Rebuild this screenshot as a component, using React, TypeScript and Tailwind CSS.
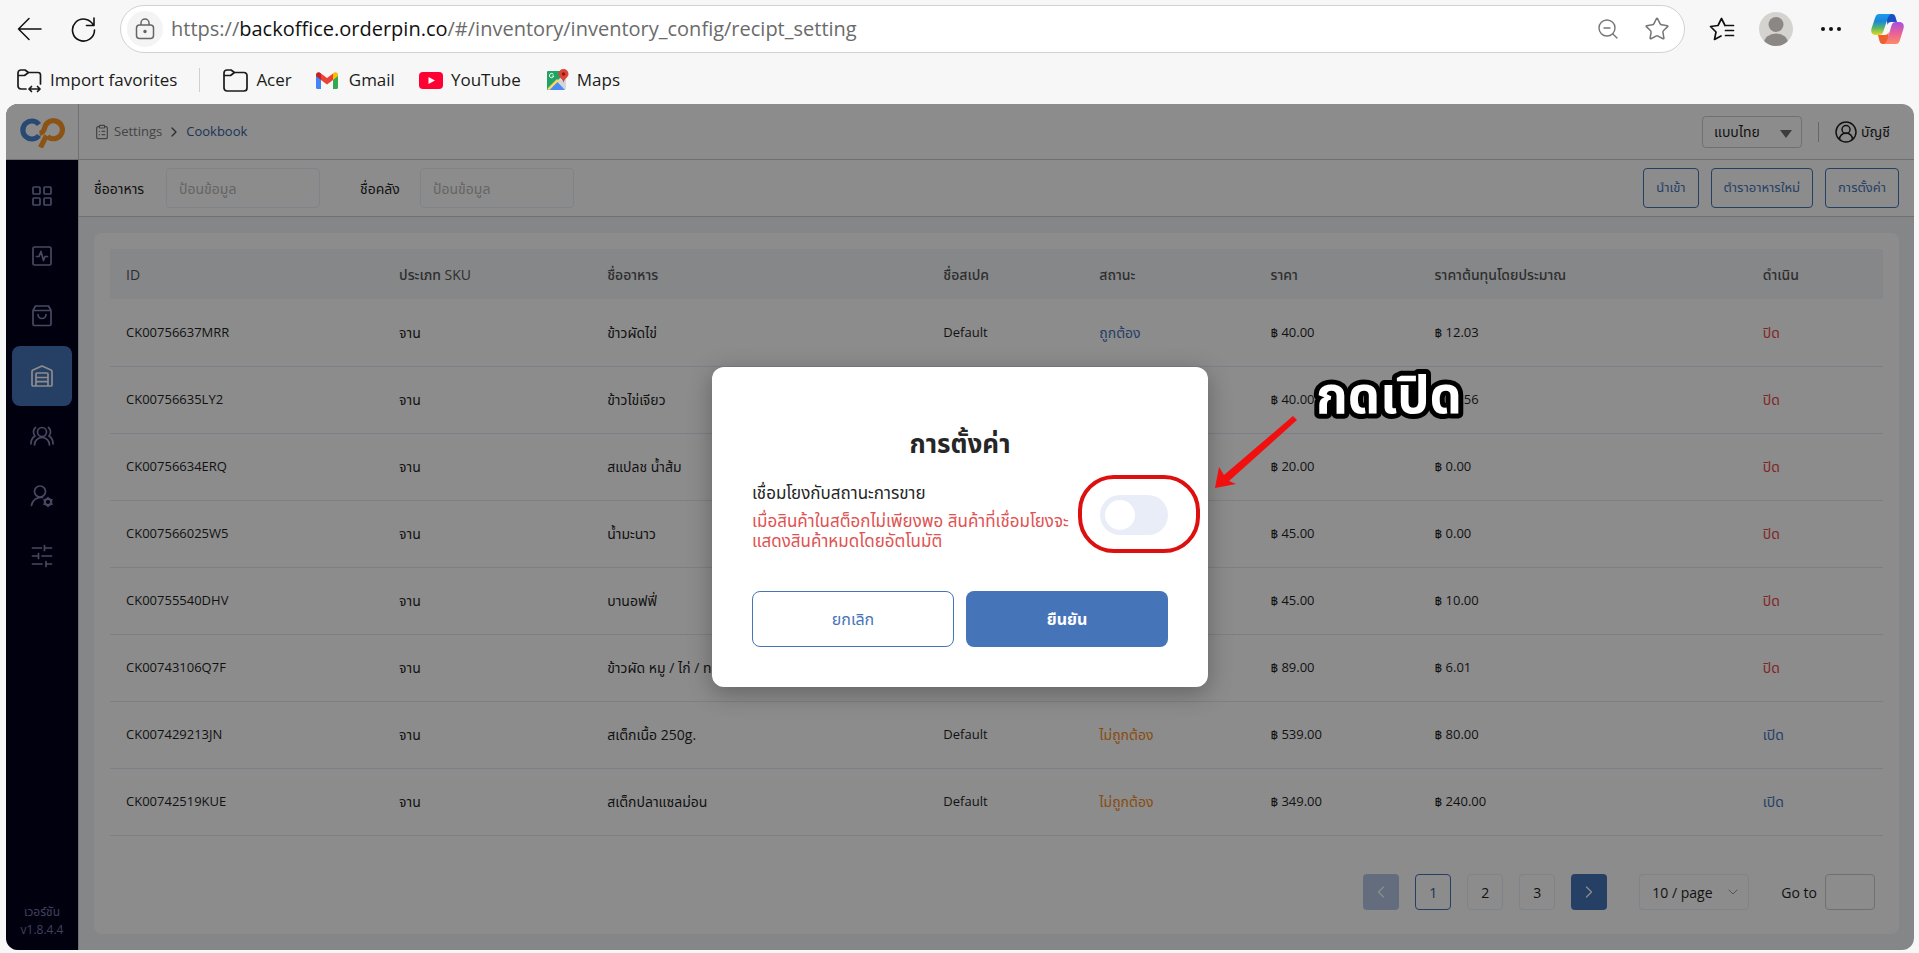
import type { ReactNode } from "react";
import { ChevronLeft, ChevronRight, ChevronDown, ClipboardList, Star, ZoomOut } from "lucide-react";

const ROWS = [
  { id: "CK00756637MRR", name: "ข้าวผัดไข่", spec: "Default", valid: true, price: "฿ 40.00", cost: "฿ 12.03", on: false },
  { id: "CK00756635LY2", name: "ข้าวไข่เจียว", spec: "Default", valid: true, price: "฿ 40.00", cost: "฿ 10.56", on: false },
  { id: "CK00756634ERQ", name: "สแปลช น้ำส้ม", spec: "Default", valid: true, price: "฿ 20.00", cost: "฿ 0.00", on: false },
  { id: "CK007566025W5", name: "น้ำมะนาว", spec: "Default", valid: true, price: "฿ 45.00", cost: "฿ 0.00", on: false },
  { id: "CK00755540DHV", name: "บานอฟฟี่", spec: "Default", valid: true, price: "฿ 45.00", cost: "฿ 10.00", on: false },
  { id: "CK00743106Q7F", name: "ข้าวผัด หมู / ไก่ / ทะเล", spec: "Default", valid: true, price: "฿ 89.00", cost: "฿ 6.01", on: false },
  { id: "CK007429213JN", name: "สเต็กเนื้อ 250g.", spec: "Default", valid: false, price: "฿ 539.00", cost: "฿ 80.00", on: true },
  { id: "CK00742519KUE", name: "สเต็กปลาแซลม่อน", spec: "Default", valid: false, price: "฿ 349.00", cost: "฿ 240.00", on: true },
];

const HEADERS = [
  { label: "ID", width: "w-[15.4%]" },
  { label: "ประเภท SKU", width: "w-[11.74%]" },
  { label: "ชื่ออาหาร", width: "w-[18.96%]" },
  { label: "ชื่อสเปค", width: "w-[8.8%]" },
  { label: "สถานะ", width: "w-[9.65%]" },
  { label: "ราคา", width: "w-[9.26%]" },
  { label: "ราคาต้นทุนโดยประมาณ", width: "w-[18.51%]" },
  { label: "ดำเนิน", width: "w-[7.68%]" },
];

function NavIcon({ children }: { children: ReactNode }) {
  return (
    <svg viewBox="0 0 24 24" className="size-6" fill="none" stroke="currentColor" strokeWidth={1.7} strokeLinecap="round" strokeLinejoin="round">
      {children}
    </svg>
  );
}

const NAV = [
  {
    label: "Dashboard",
    icon: (
      <NavIcon>
        <rect x="3" y="3" width="7" height="7" rx="1" />
        <rect x="14" y="3" width="7" height="7" rx="1" />
        <rect x="3" y="14" width="7" height="7" rx="1" />
        <rect x="14" y="14" width="7" height="7" rx="1" />
      </NavIcon>
    ),
  },
  {
    label: "Reports",
    icon: (
      <NavIcon>
        <rect x="3" y="3" width="18" height="18" rx="1.5" />
        <path d="M6.5 12.5h2.5l2-5 2.5 9 1.5-4h2.5" />
      </NavIcon>
    ),
  },
  {
    label: "Products",
    icon: (
      <NavIcon>
        <path d="M3 6.5 5.5 2h13L21 6.5V20a1.5 1.5 0 0 1-1.5 1.5h-15A1.5 1.5 0 0 1 3 20zM3 6.5h18" />
        <path d="M8 10.5a4 4 0 0 0 8 0" />
      </NavIcon>
    ),
  },
  {
    label: "Inventory",
    active: true,
    icon: (
      <NavIcon>
        <path d="M6 22H3a1 1 0 0 1-1-1V7.5a1.5 1.5 0 0 1 1-1.4L12 2l9 4.1a1.5 1.5 0 0 1 1 1.4V21a1 1 0 0 1-1 1H6V10a1 1 0 0 1 1-1h10a1 1 0 0 1 1 1v12M6 13.5h12M6 17.7h12" />
      </NavIcon>
    ),
  },
  {
    label: "Members",
    icon: (
      <NavIcon>
        <circle cx="12" cy="8" r="4.5" />
        <path d="M4.5 21a7.5 7.5 0 0 1 15 0M5.500 3.500a6 6 0 0 0-.5 8.500M18.500 3.500a6 6 0 0 1 .5 8.500M1 20a9 9 0 0 1 4-8M23 20a9 9 0 0 0-4-8" />
      </NavIcon>
    ),
  },
  {
    label: "Staff",
    icon: (
      <NavIcon>
        <circle cx="10" cy="7.5" r="5.5" />
        <path d="M1.5 21.500a9.500 9.500 0 0 1 11-8" />
        <circle cx="18" cy="18" r="3.2" strokeWidth="2.2" />
        <path d="M18 13.5v1M18 21.5v1M14 15.8l1 .5M21 19.7l1 .5M14 20.2l1-.5M21 16.3l1-.5" />
      </NavIcon>
    ),
  },
  {
    label: "Preferences",
    icon: (
      <NavIcon>
        <path d="M2.5 4h9M14.5 4h7M14.5 1.5v5M2.5 12h6M8.5 9.5v5M12 12h9.500M2.5 20h9.500M16 20h5.500M16 17.5v5" />
      </NavIcon>
    ),
  },
];

function FolderIcon({ arrows = false }: { arrows?: boolean }) {
  return (
    <svg viewBox="0 0 26 26" className="size-[26px]" fill="none" stroke="#1b1b1b" strokeWidth={1.7} strokeLinecap="round" strokeLinejoin="round">
      {arrows ? (
        <path d="M10 22H5a3 3 0 0 1-3-3V6a3 3 0 0 1 3-3h4l3.5 2.500H22a2.5 2.5 0 0 1 2.5 2.5v9M2 8.500h6.500L12.500 5.500M13 22h11M15.500 19.500 13 22l2.500 2.500M21.500 19.500 24 22l-2.500 2.500" />
      ) : (
        <path d="M5 24a3 3 0 0 1-3-3V6a3 3 0 0 1 3-3h4l3.5 2.500H22a3 3 0 0 1 3 3V21a3 3 0 0 1-3 3zM2 8.500h6.500L12.500 5.500" />
      )}
    </svg>
  );
}

function GmailIcon() {
  return (
    <svg viewBox="0 0 22 17" className="h-[17px] w-[22px]">
      <path d="M0 3v12.500A1.500 1.500 0 0 0 1.500 17H5V7z" fill="#4285f4" />
      <path d="M22 3v12.500a1.500 1.500 0 0 1-1.500 1.500H17V7z" fill="#34a853" />
      <path d="M17 1.500V8l5-4V2.500c0-2-2.200-3-3.800-1.900z" fill="#fbbc04" />
      <path d="M5 8V1.500l6 4.500 6-4.500V8l-6 4.600z" fill="#ea4335" />
      <path d="M0 2.500V4l5 4V1.500L3.800.6C2.200-.5 0 .5 0 2.500z" fill="#c5221f" />
    </svg>
  );
}

function MapsIcon() {
  return (
    <svg viewBox="0 0 24 24" className="size-6">
      <path d="M3 3h14v10L3 22a1 1 0 0 1-1-1V4a1 1 0 0 1 1-1z" fill="#1fa463" />
      <path d="M15 10 21 8v13L18 22l-7-8z" fill="#d3d6da" />
      <path d="M2.500 20.500 12 11l2.500 2.500L5.500 22H3.500z" fill="#fdd663" />
      <path d="M4.500 22 12.500 14 20 22z" fill="#4c8bf5" />
      <path d="M18.500 1a5 5 0 0 0-5 5c0 3.500 4.500 4.500 5 9 .5-4.500 5-5.500 5-9a5 5 0 0 0-5-5z" fill="#db4437" />
      <circle cx="18.500" cy="6" r="1.800" fill="#8c1a11" />
      <path d="M8.800 8H6.800M8.500 6.400A2.200 2.200 0 1 0 8.800 8" stroke="#fff" strokeWidth="1" fill="none" />
    </svg>
  );
}

function CopilotIcon() {
  return (
    <svg viewBox="0 0 33 30" className="h-[30px] w-[33px]">
      <defs>
        <linearGradient id="cpA" x1="0" y1="0" x2="0" y2="1">
          <stop offset="0" stopColor="#1a9cf0" />
          <stop offset=".35" stopColor="#1c86d8" />
          <stop offset=".65" stopColor="#52b56c" />
          <stop offset="1" stopColor="#e8d820" />
        </linearGradient>
        <linearGradient id="cpB" x1="0" y1="0" x2="0" y2="1">
          <stop offset="0" stopColor="#a550e0" />
          <stop offset=".5" stopColor="#e8609a" />
          <stop offset="1" stopColor="#ff8a63" />
        </linearGradient>
      </defs>
      <path d="M15 0h6c2 0 3 1 3.500 3l1.500 5h-6c-2 0-3 1-3.500 3z" fill="#1b4fc4" />
      <path d="M18 30h-6c-2 0-3-1-3.500-3L7 21h7c2 0 3-1 3.500-3z" fill="#f0602f" />
      <path d="M8 0h12c-2 1-3 3-3.500 5l-4 12c-.8 2.500-2 4-4.500 4H5C1 21-.5 18.500.5 14.500L4 4C4.800 1.500 6 0 8 0z" fill="url(#cpA)" />
      <path d="M25 30H13c2-1 3-3 3.500-5l4-13.500C21.300 9 22.500 8 25 8h3c4 0 5.500 2.500 4.500 6.500L29 26c-.8 2.500-2 4-4 4z" fill="url(#cpB)" />
    </svg>
  );
}

function BrowserBar() {
  return (
    <div className="h-26 shrink-0 text-[17px] text-[#1b1b1b]">
      <div className="flex h-[58px] items-center pr-[15px] pl-4">
        <button aria-label="Back" className="w-[54px]">
          <svg viewBox="0 0 26 24" className="h-6 w-[26px]" fill="none" stroke="#111" strokeWidth="1.5" strokeLinecap="round" strokeLinejoin="round">
            <path d="M25 12H2.500M13 1.500 2.500 12 13 22.500" />
          </svg>
        </button>
        <button aria-label="Refresh" className="w-[50px]">
          <svg viewBox="0 0 26 26" className="size-[26px]" fill="none" stroke="#111" strokeWidth="1.600" strokeLinecap="round" strokeLinejoin="round">
            <path d="M23.500 9.500A11 11 0 1 0 24.500 14M24 2v7.500h-7.500" />
          </svg>
        </button>
        <div className="flex h-12 flex-1 items-center rounded-full border border-[#d2d2d2] bg-white pr-3.5 pl-1.5">
          <span className="mr-2 flex size-9 items-center justify-center rounded-full bg-[#f4f4f4]">
            <svg viewBox="0 0 20 22" className="h-[22px] w-5" fill="none" stroke="#666" strokeWidth="1.5">
              <rect x="1.5" y="7" width="17" height="13.5" rx="3" />
              <path d="M6 7V5a4 4 0 0 1 8 0v2" />
              <circle cx="10" cy="13.5" r="1" fill="#666" />
            </svg>
          </span>
          <span className="flex-1 text-xl text-[#6b6b6b]">
            https://<span className="text-[#111]">backoffice.orderpin.co</span>/#/inventory/inventory_config/recipt_setting
          </span>
          <button aria-label="Zoom out" className="mr-6"><ZoomOut className="size-6 text-[#767676]" strokeWidth={1.4} /></button>
          <button aria-label="Add favorite"><Star className="size-[26px] text-[#767676]" strokeWidth={1.4} /></button>
        </div>
        <button aria-label="Favorites" className="ml-6">
          <svg viewBox="0 0 26 24" className="h-6 w-[26px]" fill="none" stroke="#111" strokeWidth="1.7" strokeLinecap="round" strokeLinejoin="round">
            <path d="M16 8.500 12.500 1.500 9 8.500 1.500 9.500 7 15 5.500 22.500 12 19M16 8.500h8.500M16.500 13.500h8M16.500 18.500h8" />
          </svg>
        </button>
        <button aria-label="Profile" className="ml-6">
          <svg viewBox="0 0 34 34" className="size-[34px]">
            <clipPath id="avatar"><circle cx="17" cy="17" r="17" /></clipPath>
            <g clipPath="url(#avatar)">
              <rect width="34" height="34" fill="#d5d3d0" />
              <circle cx="17" cy="12.5" r="7.5" fill="#8a8785" />
              <ellipse cx="17" cy="31" rx="12" ry="9.5" fill="#8a8785" />
            </g>
          </svg>
        </button>
        <button aria-label="More" className="ml-7">
          <svg viewBox="0 0 20 6" className="h-1.5 w-5" fill="#111"><circle cx="2" cy="3" r="2" /><circle cx="10" cy="3" r="2" /><circle cx="18" cy="3" r="2" /></svg>
        </button>
        <button aria-label="Copilot" className="ml-[30px]"><CopilotIcon /></button>
      </div>
      <nav className="flex h-11 items-center pl-4">
        <a href="#import" className="flex items-center gap-2"><FolderIcon arrows />Import favorites</a>
        <span className="mx-[22px] h-6 w-px bg-[#d0d0d0]" />
        <a href="#acer" className="flex items-center gap-2"><FolderIcon />Acer</a>
        <a href="#gmail" className="ml-6 flex items-center gap-[11px]"><GmailIcon />Gmail</a>
        <a href="#youtube" className="ml-6 flex items-center gap-2">
          <svg viewBox="0 0 24 17" className="h-[17px] w-6"><rect width="24" height="17" rx="4" fill="#ff0033" /><path d="m9.500 5 6.500 3.500L9.500 12z" fill="#fff" /></svg>
          YouTube
        </a>
        <a href="#maps" className="ml-6 flex items-center gap-2"><MapsIcon />Maps</a>
      </nav>
    </div>
  );
}

function Sidebar() {
  return (
    <aside className="flex w-[72px] shrink-0 flex-col bg-[#03001c]">
      <div className="flex h-14 items-center justify-center border-b border-[#c8ccd4] bg-white">
        <svg viewBox="0 0 46 32" className="h-8 w-[46px]" fill="none" strokeWidth="5.2">
          <path d="M20 8.500a9 9 0 1 0 0 11" stroke="#4a86cf" />
          <path d="M21.500 31.500 27.500 19.500M28.500 20.500a9 9 0 1 0-3-8Q24 17 20.500 17.500" stroke="#ff9a26" />
        </svg>
      </div>
      <nav className="flex flex-col items-center pt-1.5">
        {NAV.map((item) => (
          <a
            key={item.label}
            href={"#" + item.label}
            aria-label={item.label}
            className={"flex size-15 items-center justify-center rounded-lg " + (item.active ? "bg-[#4674b9] text-white" : "text-[#8286b2]")}
          >
            {item.icon}
          </a>
        ))}
      </nav>
      <p className="mt-auto pb-[11px] text-center text-xs leading-[18px] text-[#7377a8]">เวอร์ชัน<br />v1.8.4.4</p>
    </aside>
  );
}

function TopBar() {
  return (
    <header className="flex h-14 items-center border-b border-[#c8ccd4] bg-white pr-6 pl-[15px] text-[14px]">
      <ClipboardList className="size-4 text-[#7c7c7c]" strokeWidth={1.8} />
      <a href="#settings" className="ml-1 text-[13px] text-[#7c7c7c]">Settings</a>
      <ChevronRight className="mx-1 size-4 text-[#555]" />
      <a href="#cookbook" className="text-[13px] text-[#36609f]">Cookbook</a>
      <div className="relative ml-auto">
        <select aria-label="ภาษา" className="h-8 w-25 appearance-none rounded border border-[#ccc] bg-white pl-[11px]">
          <option>แบบไทย</option>
        </select>
        <svg viewBox="0 0 12 8" className="pointer-events-none absolute top-3.5 right-2.5 h-2 w-3" fill="#707070"><path d="M0 0h12L6 8z" /></svg>
      </div>
      <span className="mx-4 h-5 w-px bg-[#bbb]" />
      <button className="flex items-center gap-1">
        <svg viewBox="0 0 22 22" className="size-[22px]" fill="none" stroke="#222" strokeWidth="1.5">
          <circle cx="11" cy="11" r="10" />
          <circle cx="11" cy="8.5" r="4" />
          <path d="M4.500 18.500a6.500 6.500 0 0 1 13 0" />
        </svg>
        บัญชี
      </button>
    </header>
  );
}

function Filters() {
  return (
    <div className="flex h-[57px] items-center border-b border-[#c8ccd4] bg-white px-[15px] text-[14px]">
      <label htmlFor="dish" className="w-[72px]">ชื่ออาหาร</label>
      <input id="dish" placeholder="ป้อนข้อมูล" className="h-10 w-[154px] rounded border border-[#e8eefb] px-3 placeholder:text-[#b8b8b8]" />
      <label htmlFor="store" className="ml-10 w-[60px]">ชื่อคลัง</label>
      <input id="store" placeholder="ป้อนข้อมูล" className="h-10 w-[154px] rounded border border-[#e8eefb] px-3 placeholder:text-[#b8b8b8]" />
      <div className="ml-auto flex gap-3 text-[13px] text-[#4674b9]">
        <button className="h-10 rounded border border-[#4674b9] px-3">นำเข้า</button>
        <button className="h-10 rounded border border-[#4674b9] px-3">ตำราอาหารใหม่</button>
        <button className="h-10 rounded border border-[#4674b9] px-3">การตั้งค่า</button>
      </div>
    </div>
  );
}

function RecipeTable() {
  return (
    <table className="w-full table-fixed text-left text-[14px]">
      <thead className="bg-[#f3f6fa] text-[#555]">
        <tr className="h-[50px]">
          {HEADERS.map((h) => (
            <th key={h.label} className={"px-4 font-medium whitespace-nowrap " + h.width}>{h.label}</th>
          ))}
        </tr>
      </thead>
      <tbody>
        {ROWS.map((row) => (
          <tr key={row.id} className="h-[67px] border-b border-[#e2e8f4]">
            <td className="px-4 text-[13px]">{row.id}</td>
            <td className="px-4">จาน</td>
            <td className="px-4 whitespace-nowrap">{row.name}</td>
            <td className="px-4 text-[13px]">{row.spec}</td>
            <td className={"px-4 " + (row.valid ? "text-[#4674b9]" : "text-[#f98a1a]")}>{row.valid ? "ถูกต้อง" : "ไม่ถูกต้อง"}</td>
            <td className="px-4 text-[13px]">{row.price}</td>
            <td className="px-4 text-[13px]">{row.cost}</td>
            <td className="px-4">
              <button className={row.on ? "text-[#4674b9]" : "text-[#ec4646]"}>{row.on ? "เปิด" : "ปิด"}</button>
            </td>
          </tr>
        ))}
      </tbody>
    </table>
  );
}

function Pager() {
  return (
    <div className="mt-auto flex items-center justify-end gap-4 pr-2 pb-2 text-[14px]">
      <button aria-label="Previous" className="flex size-9 items-center justify-center rounded bg-[#b5c7e3] text-white"><ChevronLeft className="size-5" strokeWidth={1.5} /></button>
      <button className="size-9 rounded border border-[#4674b9] text-[#36609f]">1</button>
      <button className="size-9 rounded border border-[#e8eefb]">2</button>
      <button className="size-9 rounded border border-[#e8eefb]">3</button>
      <button aria-label="Next" className="flex size-9 items-center justify-center rounded bg-[#4674b9] text-white"><ChevronRight className="size-5" strokeWidth={1.5} /></button>
      <div className="relative ml-4">
        <select aria-label="Page size" className="h-9 w-[110px] appearance-none rounded border border-[#e8eefb] bg-white pl-3">
          <option>10 / page</option>
        </select>
        <ChevronDown className="pointer-events-none absolute top-2.5 right-2 size-4 text-[#999]" strokeWidth={1.5} />
      </div>
      <label className="ml-4 flex items-center gap-2">
        Go to
        <input className="h-9 w-[50px] rounded border border-[#ccc]" />
      </label>
    </div>
  );
}

function SettingDialog() {
  return (
    <div role="dialog" aria-labelledby="dialog-title" className="relative flex h-80 w-[496px] flex-col rounded-xl bg-white px-10 pt-[58px] pb-10 text-[#262626] shadow-[0_6px_24px_rgba(0,0,0,0.3)]">
      <h2 id="dialog-title" className="text-center text-[26px] leading-9 font-bold">การตั้งค่า</h2>
      <div className="mt-[18px] flex items-center justify-between text-[17px]">
        <div className="w-[330px]">
          <label htmlFor="link-stock" className="block leading-7">เชื่อมโยงกับสถานะการขาย</label>
          <p className="mt-1 leading-5 whitespace-nowrap text-[#e05252]">เมื่อสินค้าในสต็อกไม่เพียงพอ สินค้าที่เชื่อมโยงจะ<br />แสดงสินค้าหมดโดยอัตโนมัติ</p>
        </div>
        <div className="relative flex">
          <input
            id="link-stock"
            type="checkbox"
            role="switch"
            className="flex h-10 w-[68px] appearance-none items-center rounded-full bg-[#e9edf7] p-[5px] before:size-[30px] before:rounded-full before:bg-white checked:justify-end checked:bg-[#4674b9]"
          />
          <span className="pointer-events-none absolute -top-5 -right-8 -bottom-[18px] -left-[22px] rounded-[36px] border-4 border-[#dd0f0f]" />
          {/* callout pointing at the switch */}
          <svg viewBox="0 0 84 74" className="pointer-events-none absolute -top-20 left-[115px] h-[74px] w-21">
            <path d="M78 1 82 5 14 66 21 69 0 73 4 52 9 60z" fill="#f01010" />
          </svg>
          <svg viewBox="0 0 170 70" className="pointer-events-none absolute -top-[138px] left-[204px] h-[70px] w-[170px]">
            <text x="85" y="56" textAnchor="middle" fontSize="51" fontWeight="700" fill="#fff" stroke="#000" strokeWidth="10" strokeLinejoin="round" paintOrder="stroke">กดเปิด</text>
          </svg>
        </div>
      </div>
      <div className="mt-auto grid grid-cols-2 gap-3 text-[16px]">
        <button className="h-14 rounded-lg border border-[#4674b9] text-[#4674b9]">ยกเลิก</button>
        <button className="h-14 rounded-lg bg-[#4674b9] font-bold text-white">ยืนยัน</button>
      </div>
    </div>
  );
}

export default function App() {
  return (
    <div className="flex h-screen flex-col bg-[#f7f7f7] font-['Open_Sans','Noto_Sans','Noto_Sans_Thai',sans-serif]">
      <BrowserBar />
      <div className="relative mr-[5px] mb-[3px] ml-1.5 flex flex-1 overflow-hidden rounded-xl text-[#1f1f1f]">
        <Sidebar />
        <div className="flex min-w-0 flex-1 flex-col border-l border-[#c8ccd4] bg-[#f3f5f8]">
          <TopBar />
          <Filters />
          <main className="mx-[15px] mt-4 mb-4 flex flex-1 flex-col rounded-lg bg-white p-4">
            <RecipeTable />
            <Pager />
          </main>
        </div>
        <div className="absolute inset-0 flex items-center justify-center bg-black/45">
          <SettingDialog />
        </div>
      </div>
    </div>
  );
}
